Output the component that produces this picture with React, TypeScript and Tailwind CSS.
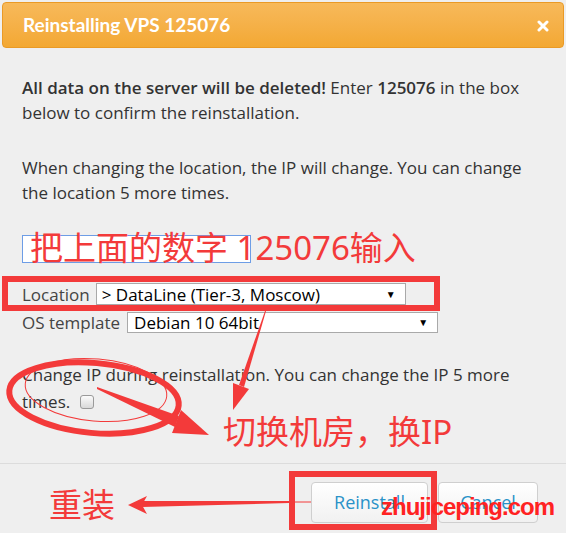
import React from 'react';

const red = '#f33a3a';

export default function App() {
  return (
    <div
      className="relative w-[566px] h-[533px] overflow-hidden bg-[#efefef] text-[#333]"
      style={{ fontFamily: '"Open Sans", "Noto Sans", sans-serif' }}
    >
      {/* Header */}
      <div className="mx-[2px] mt-[2px] h-[46px] rounded-[4px] border border-[#ea9a26] bg-gradient-to-b from-[#f7b95a] to-[#f3a832] flex items-center justify-between pl-[20px] pr-[14px]">
        <span className="text-white font-bold text-[19px]" style={{ fontFamily: 'Lato, sans-serif' }}>
          Reinstalling VPS 125076
        </span>
        <svg width="12" height="12" viewBox="0 0 12 12" className="mt-[1px]">
          <path d="M2 2 L10 10 M10 2 L2 10" stroke="white" strokeWidth="3" strokeLinecap="round" />
        </svg>
      </div>

      {/* Body */}
      <div className="px-[22px] pt-[27px] text-[17px] leading-[25px]">
        <p>
          <span className="font-semibold">All data on the server will be deleted!</span> Enter{' '}
          <span className="font-semibold">125076</span> in the box below to confirm the reinstallation.
        </p>
        <p className="mt-[30px]">
          When changing the location, the IP will change. You can change the location 5 more times.
        </p>
        <input className="block mt-[30px] w-[229px] h-[28px] bg-white border border-[#6d9de6] outline-none" />
        <div className="mt-[20px] flex items-center gap-[6px] h-[22px]">
          <span className="text-[#444]">Location</span>
          <div className="w-[310px] h-[22px] bg-white border border-[#a9a9a9] flex items-center justify-between pl-[5px] pr-[9px] text-[17px] text-black">
            <span>&gt; DataLine (Tier-3, Moscow)</span>
            <span className="text-[10px]">▼</span>
          </div>
        </div>
        <div className="mt-[7px] flex items-center gap-[7px] h-[21px]">
          <span className="text-[#444]">OS template</span>
          <div className="w-[311px] h-[21px] bg-white border border-[#a9a9a9] flex items-center justify-between pl-[6px] pr-[9px] text-[17px] text-black">
            <span>Debian 10 64bit</span>
            <span className="text-[10px]">▼</span>
          </div>
        </div>
        <p className="mt-[28px] leading-[27px]">
          Change IP during reinstallation. You can change the IP 5 more times.
          <span className="inline-block align-middle w-[14px] h-[14px] rounded-[3px] border border-[#9a9a9a] bg-gradient-to-b from-[#fbfbfb] to-[#d9d9d9] ml-[10px] -mt-[2px]" />
        </p>
      </div>

      {/* Footer */}
      <div className="absolute left-0 right-0 top-[463px] border-t border-[#dcdcdc] flex justify-end gap-[10px] pr-[28px] pt-[18px]">
        <button className="w-[117px] h-[41px] rounded-[4px] border border-[#cfcfcf] bg-gradient-to-b from-white to-[#f1f1f1] text-[#2a92c8] text-[18px]">
          Reinstall
        </button>
        <button className="w-[100px] h-[41px] rounded-[4px] border border-[#cfcfcf] bg-gradient-to-b from-white to-[#f1f1f1] text-[#2a92c8] text-[18px]">
          Cancel
        </button>
      </div>

      {/* Annotations */}
      <div className="absolute left-[2px] top-[276px] w-[438px] h-[35px] border-[6px] border-[#f33a3a]" />
      <div className="absolute left-[289px] top-[471px] w-[148px] h-[59px] border-[6px] border-[#f33a3a]" />

      <div
        className="absolute left-[30px] top-[226px] text-[33px] leading-[44px] text-[#f33a3a] whitespace-nowrap"
        style={{ fontFamily: '"Noto Sans", "Noto Sans CJK SC", sans-serif' }}
      >
        把上面的数字 125076输入
      </div>
      <div
        className="absolute left-[223px] top-[410px] text-[33px] leading-[44px] text-[#f33a3a] whitespace-nowrap"
        style={{ fontFamily: '"Noto Sans", "Noto Sans CJK SC", sans-serif' }}
      >
        切换机房，换IP
      </div>
      <div
        className="absolute left-[49px] top-[481px] text-[33px] leading-[44px] text-[#f33a3a] whitespace-nowrap"
        style={{ fontFamily: '"Noto Sans CJK SC", sans-serif' }}
      >
        重装
      </div>
      <div
        className="absolute left-[381px] top-[492px] text-[24px] leading-[30px] font-bold text-[#f22] tracking-[-1px] whitespace-nowrap"
        style={{ fontFamily: '"Liberation Sans", sans-serif' }}
      >
        zhujiceping.com
      </div>

      <svg className="absolute inset-0 pointer-events-none" width="566" height="533" viewBox="0 0 566 533">
        <ellipse cx="94" cy="398" rx="85" ry="35" fill="none" stroke={red} strokeWidth="6" transform="rotate(5 94 398)" />
        <ellipse cx="96" cy="390" rx="71" ry="31" fill="none" stroke={red} strokeWidth="1" transform="rotate(5 96 390)" />
        {/* thick arrow to 切换 */}
        <polygon points="97,387 179,416 175,427 97,389" fill={red} />
        <polygon points="209,435 181,410 172,433" fill={red} />
        {/* thin arrow from location */}
        <polygon points="265,311 266,311 244,387 239,385" fill={red} />
        <polygon points="233,410 233,383 249,389" fill={red} />
        {/* arrow to 重装 */}
        <line x1="285" y1="502" x2="311" y2="502" stroke={red} strokeWidth="1" />
        <polygon points="142,501 289,501 289,503 142,507" fill={red} />
        <polygon points="128,505 147,496 142,505 147,514" fill={red} />
      </svg>
    </div>
  );
}
